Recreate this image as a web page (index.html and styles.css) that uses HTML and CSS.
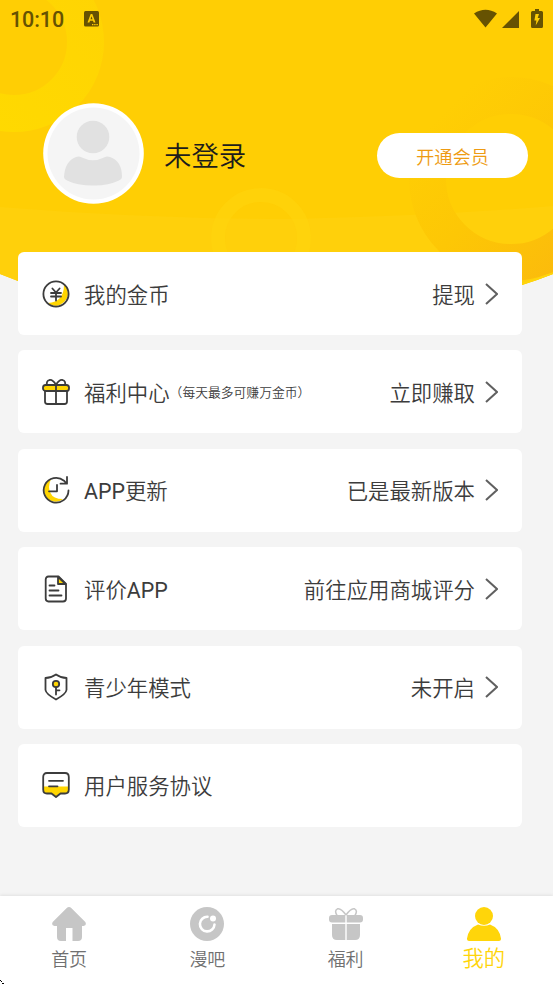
FILE: index.html
```html
<!DOCTYPE html>
<html lang="zh-CN">
<head>
<meta charset="utf-8">
<title>我的</title>
<link rel="stylesheet" href="styles.css">
</head>
<body>
<div class="app">
  <svg class="backdrop" viewBox="0 0 553 300" aria-hidden="true">
    <defs>
      <linearGradient id="warm" x1="0" y1="0" x2="1" y2="1"><stop offset=".1" stop-color="#ffce04"/><stop offset=".5" stop-color="#fdc705"/><stop offset="1" stop-color="#fbb90d"/></linearGradient>
      <linearGradient id="bright" x1="0" y1="1" x2="1" y2="0"><stop offset="0" stop-color="#ffda00"/><stop offset="1" stop-color="#ffd403"/></linearGradient>
      <clipPath id="hero"><path d="M0 0H553V274Q538 280 522 285Q270 350 18 281L0 274Z"/></clipPath>
    </defs>
    <g clip-path="url(#hero)">
      <path fill="#ffce04" d="M0 0H553V300H0Z"/>
      <path fill="#ffd00b" d="M0 207Q150 219 290 219Q430 216 553 206V300H0Z"/>
      <circle cx="14" cy="42" r="71.5" fill="none" stroke="url(#bright)" stroke-width="37"/>
      <circle cx="261" cy="238" r="43" fill="none" stroke="#ffd50d" stroke-width="14" opacity=".5"/>
      <circle cx="511" cy="179" r="83.5" fill="none" stroke="url(#warm)" stroke-width="37"/>
      <path d="M522 284Q538 279 553 273.500" fill="none" stroke="#ffd50b" stroke-width="2"/>
    </g>
  </svg>

  <header class="status">
    <span class="clock">10:10</span>
    <svg class="keyboard" viewBox="0 0 15 16"><rect width="15" height="15.500" rx="1.500"/><path class="cut" fill-rule="evenodd" d="M3.500 11.500L6.700 3H8.300L11.500 11.500H9.600L9 9.700H6L5.400 11.500ZM6.500 8.200H8.500L7.500 5.200Z"/><path class="cut" d="M8 13h1.400v1.200H8zM10.200 13h1.400v1.200h-1.400zM12.400 13h1.400v1.200h-1.400z"/></svg>
    <svg class="signals" viewBox="0 0 70 21"><path d="M0 4.500Q11.500-3 23 4.500L11.500 18.500ZM28 19L45 2V19ZM57 3.500a1.500 1.500 0 0 1 1.500-1.500H61V0h4v2h2.500A1.500 1.500 0 0 1 69 3.500v14a1.500 1.500 0 0 1-1.500 1.500h-9A1.500 1.500 0 0 1 57 17.500Z"/><path class="cut" d="M61.500 5H65L63.700 9H66L61.700 16.500L62.400 11.500H60.400Z"/></svg>
  </header>

  <section class="profile">
    <svg class="avatar" viewBox="0 0 101 101"><circle cx="50.500" cy="50.500" r="50.300" fill="#fff"/><circle cx="50.500" cy="50.500" r="46" fill="#f5f5f5"/><circle cx="50" cy="34" r="16.300" fill="#e1e1e1"/><path fill="#e1e1e1" d="M33 54Q36 53 39 54.500Q50 60 61 54.500Q64 53 67 54Q79 58 79 74Q79 76 76 77.500Q64 83 50 82.500Q34 82.500 24 77.500Q21 76 21 74Q22 58 33 54Z"/></svg>
    <h1 class="name">未登录</h1>
    <button class="vip">开通会员</button>
  </section>

  <main class="list">
    <a class="card">
      <svg class="icon" viewBox="0 0 28 28"><path class="yellow edge" d="M22 4.500Q26 8 26 15Q24 24 14 26Q10 26 6 23Q22 22 22 4.500Z"/><circle cx="14" cy="14" r="12.600"/><path d="M10.400 8.500L14 12.500L17.600 8.500M9 13h10M9 16.500h10M14 12.500V20.500"/></svg>
      <span class="label">我的金币</span><span class="value">提现</span>
      <svg class="arrow" viewBox="0 0 13 22"><path d="M1 1L12 11L1 21"/></svg>
    </a>
    <a class="card">
      <svg class="icon" viewBox="0 0 28 28"><path d="M3 12.500V23.500Q3 26 5.500 26H22.500Q25 26 25 23.500V12.500M14 7V26"/><rect class="yellow" x="1" y="7" width="26" height="6" rx="2.600"/><path d="M14 7V13M14 7Q11 1.500 7.500 2Q4 3 5 7M14 7Q17 1.500 20.500 2Q24 3 23 7"/></svg>
      <span class="label">福利中心</span><span class="note">（每天最多可赚万金币）</span><span class="value">立即赚取</span>
      <svg class="arrow" viewBox="0 0 13 22"><path d="M1 1L12 11L1 21"/></svg>
    </a>
    <a class="card">
      <svg class="icon" viewBox="0 0 28 28"><path class="yellow edge" d="M9 3Q3 6 2 12Q2 20 7 24Q15 28 21 23Q11 23 8.500 17Q5.500 11 9 3Z"/><path d="M26.500 14.500A12.400 12.400 0 1 1 22 4.700L24.500 7.500M25 1V7.700H18.500M15 9V15.300H7"/></svg>
      <span class="label"><span class="latin">APP</span>更新</span><span class="value">已是最新版本</span>
      <svg class="arrow" viewBox="0 0 13 22"><path d="M1 1L12 11L1 21"/></svg>
    </a>
    <a class="card">
      <svg class="icon" viewBox="0 0 28 28"><path d="M6.500 1.500H16.500L24 9V23.500Q24 26.500 21 26.500H6.500Q3.700 26.500 3.700 23.500V4.500Q3.700 1.500 6.500 1.500Z"/><path class="yellow" d="M16 1.800V9H23.500Z"/><path d="M7.500 10.500h5M7.500 15.500h9M7.500 20.500h12"/></svg>
      <span class="label">评价<span class="latin">APP</span></span><span class="value">前往应用商城评分</span>
      <svg class="arrow" viewBox="0 0 13 22"><path d="M1 1L12 11L1 21"/></svg>
    </a>
    <a class="card">
      <svg class="icon" viewBox="0 0 28 28"><path d="M14 1.500Q19 5 24.500 5V17Q24 21 14 26.500Q4 21 3.500 17V5Q9 5 14 1.500Z"/><circle class="yellow" cx="14" cy="11" r="3.200"/><path d="M14 14.300V21.500M14 17.300h3.500"/></svg>
      <span class="label">青少年模式</span><span class="value">未开启</span>
      <svg class="arrow" viewBox="0 0 13 22"><path d="M1 1L12 11L1 21"/></svg>
    </a>
    <a class="card">
      <svg class="icon" viewBox="0 0 28 28"><path class="yellow edge" d="M1.500 15.500H26.500V20Q26 22.500 23.500 22.500H18L14 26L10 22.500H4.500Q2 22.500 1.500 20Z"/><path d="M5 2H23Q26.800 2 26.800 6V18.500Q26.800 22.500 23 22.500H18.500L14 26L9.500 22.500H5Q1.200 22.500 1.200 18.500V6Q1.200 2 5 2ZM7 9.800H21M7 15.300H15.500"/></svg>
      <span class="label">用户服务协议</span>
    </a>
  </main>

  <nav class="tabs">
    <a class="tab"><svg class="tabicon" viewBox="0 0 34 34"><path d="M14.500 1.200Q17 -1 19.500 1.200L33.300 15Q35 18.500 31.500 19H30V30Q30 34 26 34H20.500V21H14V34H9Q5 34 5 30V19H2.500Q-1 18.500 .7 15Z"/></svg><span>首页</span></a>
    <a class="tab"><svg class="tabicon" viewBox="0 0 34 34"><circle cx="17" cy="17" r="17"/><path fill="none" stroke="#fff" stroke-width="2.600" stroke-linecap="round" d="M17.500 9.800A7.300 7.300 0 1 0 24.500 17.500"/><circle cx="23" cy="11.500" r="3" fill="#fff"/></svg><span>漫吧</span></a>
    <a class="tab"><svg class="tabicon" viewBox="0 0 34 34"><path d="M3 8H16.300V15.500H3Q0 15.500 0 12.500V11Q0 8 3 8ZM17.700 8H31Q34 8 34 11V12.500Q34 15.500 31 15.500H17.700ZM3 17H16.300V33H8Q3 33 3 28ZM17.700 17H31V28Q31 33 26 33H17.700Z"/><path fill="none" stroke="#c6c6c6" stroke-width="1.500" d="M17 8Q12 .8 8.500 1.800Q5 3.500 8 8.500M17 8Q22 .8 25.500 1.800Q29 3.500 26 8.500"/></svg><span>福利</span></a>
    <a class="tab active"><svg class="tabicon" viewBox="0 0 34 34"><circle cx="17" cy="9" r="9"/><path d="M11 17.500Q17 20 23 17.500Q32.500 21 34 31.500Q34.200 34 32 34H2Q-.2 34 0 31.500Q1.500 21 11 17.500Z"/></svg><span>我的</span></a>
  </nav>
  <svg class="cursor" viewBox="0 0 4 4" shape-rendering="crispEdges"><path d="M0 0h1v1H0zM1 1h1v1H1zM2 3h2v1H2z"/></svg>
</div>
</body>
</html>
```

FILE: styles.css
```css
* { box-sizing: border-box; }
body { margin: 0; font-family: Roboto, "Noto Sans CJK SC", sans-serif; font-weight: 350; background: #f4f4f4; }
.app { position: relative; width: 553px; height: 984px; overflow: hidden; display: flex; flex-direction: column; }
.backdrop { position: absolute; top: 0; left: 0; width: 553px; height: 300px; }
.status, .profile, .list, .tabs { position: relative; }
.status { height: 38px; padding: 0 9px 0 10px; display: flex; align-items: center; color: #665202; fill: #665202; }
.clock { font-size: 21.500px; font-weight: 500; letter-spacing: -.1px; width: 74px; line-height: 38px; padding-top: 1px; }
.keyboard { width: 15px; height: 16px; }
.signals { width: 70px; height: 21px; margin: 0 0 0 auto; }
.cut { fill: #ffce04; }
.profile { height: 214px; padding: 65px 25px 0 43px; display: flex; align-items: flex-start; }
.avatar { width: 101px; height: 101px; }
.name { margin: 0 0 0 20px; font-size: 27.400px; font-weight: 350; line-height: 40px; padding-top: 34px; color: #1c1c1c; }
.vip { margin: 30px 0 0 auto; width: 151px; height: 45px; padding: 0; border: 0; border-radius: 23px; background: #fff; color: #ee9b12; font: 350 18.300px Roboto, "Noto Sans CJK SC", sans-serif; }
.list { padding: 0 31px 0 18px; display: flex; flex-direction: column; gap: 15.400px; }
.card { height: 83px; padding: 0 24.500px 0 23.500px; background: #fff; border-radius: 6px; display: flex; align-items: center; font-size: 21.400px; color: #3c3c3c; }
.icon { width: 28px; height: 28px; margin-right: 14.500px; fill: none; stroke: #3c3c3c; stroke-width: 1.800; stroke-linecap: round; stroke-linejoin: round; }
.icon .yellow { fill: #ffd500; }
.icon .edge { stroke: none; }
.label, .value { padding-bottom: 1px; }
.latin { font-weight: 400; }
.note { font-size: 12.800px; }
.value { margin-left: auto; }
.arrow { width: 13px; height: 22px; margin-left: 9.500px; fill: none; stroke: #606060; stroke-width: 2; }
.tabs { margin-top: auto; height: 88px; background: #fff; display: grid; grid-template-columns: repeat(4, 1fr); box-shadow: 0 -1px 3px rgba(0, 0, 0, .08); }
.tab { display: flex; flex-direction: column; align-items: center; padding-top: 11px; color: #707070; fill: #c6c6c6; font-size: 18px; line-height: 38px; }
.tabicon { width: 34px; height: 34px; flex: none; }
.active { color: #ffd50a; fill: #ffd50a; font-size: 21.300px; line-height: 35px; }
.cursor { position: absolute; left: 0; bottom: 0; width: 4px; height: 4px; }
```
